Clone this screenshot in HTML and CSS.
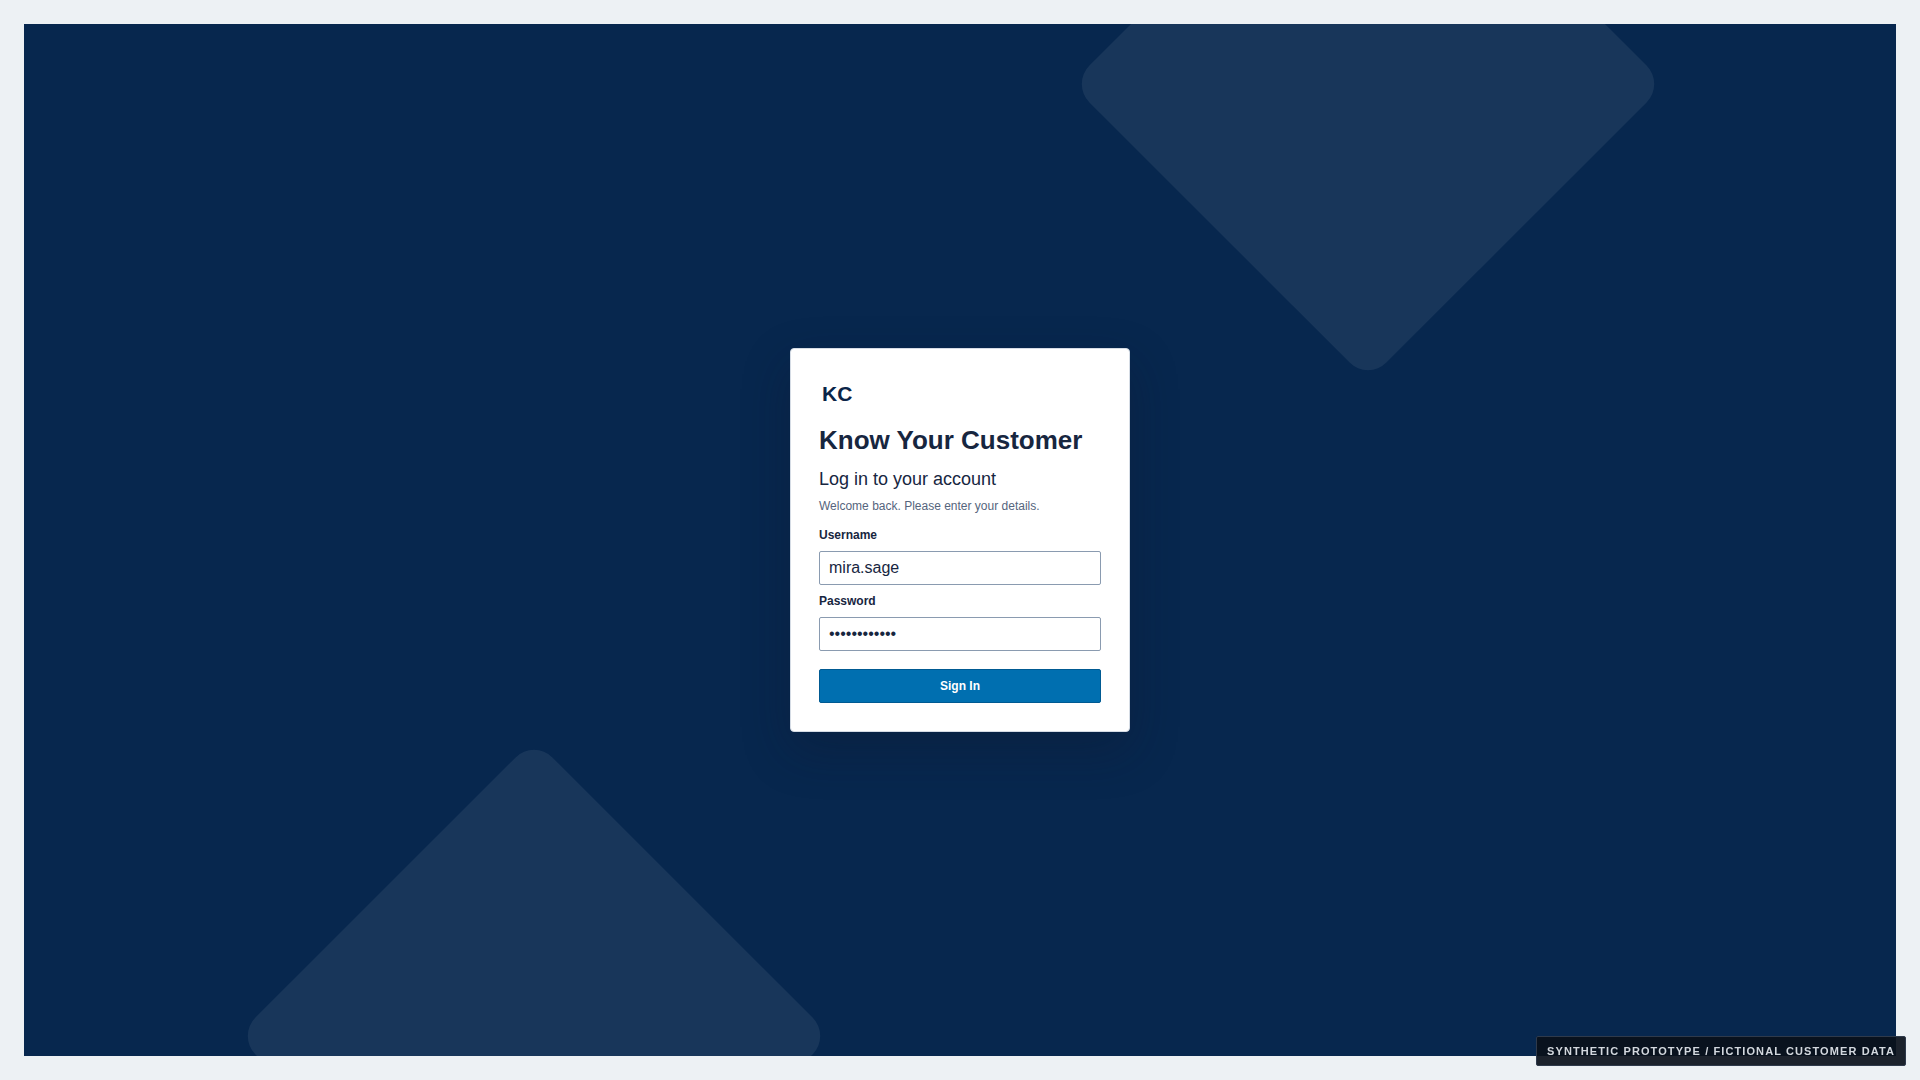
FILE: index.html
```html
<!DOCTYPE html>
<html lang="en">
<head>
    <meta charset="UTF-8">
    <meta name="viewport" content="width=device-width, initial-scale=1.0">
    <title>Know Your Customer</title>
    <link rel="stylesheet" href="styles.css">
</head>
<body>
    <main class="stage">
        <div class="shape shape-top"></div>
        <div class="shape shape-bottom"></div>

        <section class="card">
            <div class="logo">KC</div>
            <h1>Know Your Customer</h1>
            <h2>Log in to your account</h2>
            <p class="hint">Welcome back. Please enter your details.</p>
            <form class="login-form">
                <label for="username">Username</label>
                <input id="username" type="text" value="mira.sage">
                <label for="password">Password</label>
                <input id="password" type="password" value="demopassword">
                <button type="button">Sign In</button>
            </form>
        </section>
    </main>
    <div class="notice">SYNTHETIC PROTOTYPE / FICTIONAL CUSTOMER DATA</div>
</body>
</html>
```

FILE: styles.css
```css
* {
    box-sizing: border-box;
}
html, body {
    height: 100%;
}
body {
    margin: 0;
    padding: 24px;
    background-color: #edf1f4;
    font-family: "Liberation Sans", Arial, sans-serif;
    color: #17263f;
    overflow: hidden;
}
.stage {
    position: relative;
    height: 100%;
    background-color: #07274e;
    display: flex;
    justify-content: center;
    align-items: center;
    overflow: hidden;
}
.shape {
    position: absolute;
    width: 420px;
    height: 420px;
    border-radius: 26px;
    background-color: rgba(255, 255, 255, 0.07);
    transform: rotate(45deg);
}
.shape-top {
    top: -150px;
    left: 1134px;
}
.shape-bottom {
    bottom: -190px;
    left: 300px;
}
.card {
    position: relative;
    width: 340px;
    height: 384px;
    padding: 28px;
    background-color: #fff;
    border: 1px solid #d5dce5;
    border-radius: 4px;
    box-shadow: 0 18px 48px rgba(15, 23, 42, 0.3);
}
.logo {
    padding-left: 3px;
    margin-top: 5px;
    font-size: 21px;
    line-height: 24px;
    font-weight: 700;
    color: #0a2448;
}
h1 {
    margin: 18px 0 0;
    font-size: 26px;
    line-height: 32px;
    font-weight: 700;
}
h2 {
    margin: 11px 0 0;
    font-size: 18px;
    line-height: 24px;
    font-weight: 400;
}
.hint {
    margin: 6px 0 0;
    font-size: 12px;
    line-height: 18px;
    color: #55657d;
}
.login-form {
    display: flex;
    flex-direction: column;
    margin-top: 12px;
}
label {
    font-size: 12px;
    line-height: 16px;
    font-weight: 700;
    margin-bottom: 8px;
}
input {
    height: 34px;
    padding: 0 9px;
    margin-bottom: 8px;
    border: 1px solid #8a9bb0;
    border-radius: 2px;
    font-family: inherit;
    font-size: 16px;
    color: #17263f;
    background-color: #fff;
}
button {
    height: 34px;
    margin-top: 10px;
    border: 1px solid #005a92;
    border-radius: 2px;
    background-color: #006fb0;
    color: #fff;
    font-family: inherit;
    font-size: 12px;
    font-weight: 700;
}
.notice {
    position: fixed;
    right: 14px;
    bottom: 14px;
    height: 30px;
    padding: 0 10px;
    display: flex;
    align-items: center;
    background-color: rgba(10, 16, 26, 0.92);
    border: 1px solid #2f3a4b;
    border-radius: 2px;
    color: #d3d8de;
    font-size: 11px;
    font-weight: 700;
    letter-spacing: 1.1px;
}
```
